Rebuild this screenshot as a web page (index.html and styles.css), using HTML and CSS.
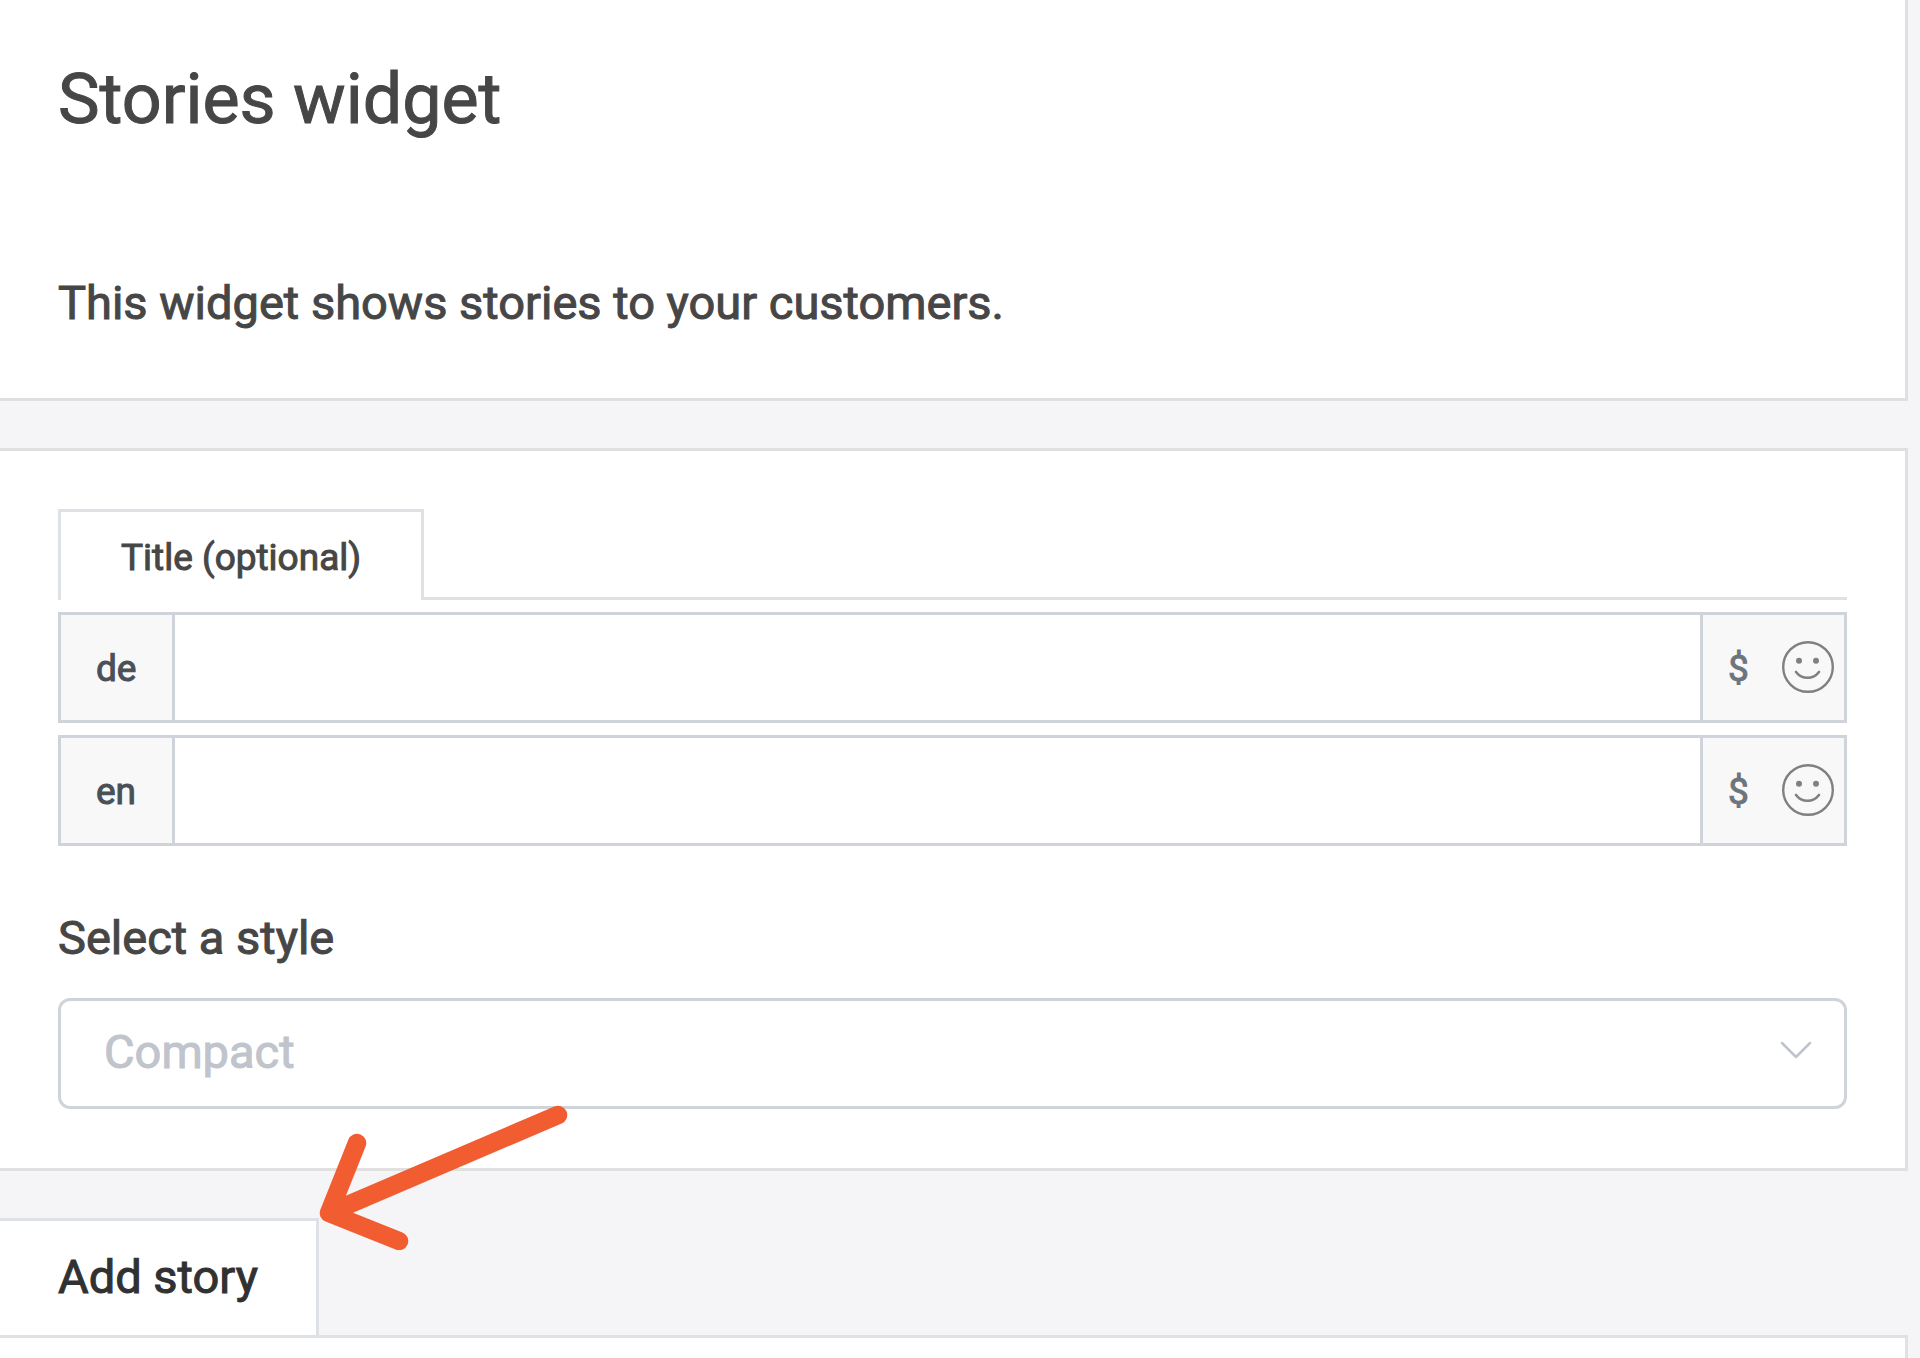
FILE: index.html
```html
<!DOCTYPE html>
<html lang="en">
<head>
<meta charset="utf-8">
<title>Stories widget</title>
<link rel="stylesheet" href="styles.css">
</head>
<body>
<svg class="sprite" aria-hidden="true">
  <symbol id="smile" viewBox="0 0 54 54">
    <circle cx="27" cy="27" r="24.8" fill="none" stroke="currentColor" stroke-width="2.4"/>
    <circle cx="18" cy="20.8" r="3"/>
    <circle cx="35" cy="20.8" r="3"/>
    <path d="M15 32 Q19.5 37.8 26.5 37.8 Q33.5 37.8 38 32" fill="none" stroke="currentColor" stroke-width="2.6" stroke-linecap="round"/>
  </symbol>
</svg>
<main class="page">
  <section class="card intro">
    <h1 class="heading">Stories widget</h1>
    <p class="lead">This widget shows stories to your customers.</p>
  </section>

  <form class="card settings">
    <div class="tabs">
      <div class="tab" id="title-tab">Title (optional)</div>
      <div class="tabs-line"></div>
    </div>
    <div class="translations" role="group" aria-labelledby="title-tab">
      <div class="input-group">
        <label class="lang" for="title-de">de</label>
        <input class="title-input" id="title-de" type="text">
        <div class="tools">
          <button class="tool variable" type="button">$</button>
          <button class="tool emoji" type="button" aria-label="Emoji"><svg class="smile"><use href="#smile"/></svg></button>
        </div>
      </div>
      <div class="input-group">
        <label class="lang" for="title-en">en</label>
        <input class="title-input" id="title-en" type="text">
        <div class="tools">
          <button class="tool variable" type="button">$</button>
          <button class="tool emoji" type="button" aria-label="Emoji"><svg class="smile"><use href="#smile"/></svg></button>
        </div>
      </div>
    </div>
    <label class="field-label" for="style">Select a style</label>
    <div class="select-wrap">
      <select class="select" id="style">
        <option>Compact</option>
      </select>
      <svg class="chevron" viewBox="0 0 32 18" aria-hidden="true"><path d="M2 2 L16 16 L30 2"/></svg>
    </div>
  </form>

  <div class="story-bar">
    <button class="add-story" type="button">Add story</button>
    <svg class="arrow" viewBox="0 0 260 150" aria-hidden="true"><path d="M245 15 L16 113 M44 43 L16 113 L86 141"/></svg>
  </div>
  <section class="card stories"></section>
</main>
</body>
</html>
```
FILE: styles.css
```css
* {
  box-sizing: border-box;
}

body {
  margin: 0;
  background: #f5f5f8;
  color: #464646;
  font-family: Roboto, "Liberation Sans", sans-serif;
  font-size: 47px;
  line-height: 72px;
  -webkit-text-stroke: 1px currentColor;
}

button,
input,
select {
  font: inherit;
  color: inherit;
  -webkit-text-stroke: 1px currentColor;
}

.sprite {
  display: none;
}

.page {
  display: flex;
  flex-direction: column;
  min-height: 100vh;
  padding-right: 12px;
}

.card {
  background: #fff;
  border: 3px solid #e0e0e0;
  border-left: 0;
  padding: 58px 58px 59px;
}

.intro {
  border-top: 0;
}

.heading {
  margin: 0 0 127px;
  font-size: 70px;
  line-height: 82px;
  font-weight: 400;
}

.lead {
  margin: 0;
}

.settings {
  margin-top: 47px;
}

.tabs {
  display: flex;
  font-size: 37px;
  line-height: 84px;
}

.tab {
  border: 3px solid #dee2e6;
  border-bottom: 0;
  padding: 4px 60px 0;
}

.tabs-line {
  flex: 1;
  border-bottom: 3px solid #dee2e6;
}

.translations {
  display: grid;
  gap: 12px;
  margin: 12px 0 56px;
}

.input-group {
  display: flex;
  height: 111px;
  border: 3px solid #ced4da;
  font-size: 37px;
  line-height: 48px;
}

.lang {
  display: flex;
  align-items: center;
  width: 114px;
  padding: 2px 0 0 35px;
  border-right: 3px solid #ced4da;
  background: #f8f8f8;
  color: #495057;
}

.title-input {
  flex: 1;
  min-width: 0;
  border: 0;
  padding: 0 32px;
  background: #fff;
}

.tools {
  display: flex;
  align-items: center;
  justify-content: space-between;
  width: 144px;
  padding: 0 9px 2px 25px;
  border-left: 3px solid #ced4da;
  background: #f8f8f8;
}

.tool {
  display: flex;
  border: 0;
  padding: 0;
  background: none;
  color: #6c757d;
}

.variable {
  padding-top: 4px;
}

.emoji {
  color: #808080;
}

.smile {
  width: 54px;
  height: 54px;
  fill: currentColor;
}

.field-label {
  display: block;
  margin-bottom: 24px;
}

.select-wrap {
  position: relative;
}

.select {
  display: block;
  appearance: none;
  width: 100%;
  height: 111px;
  border: 3px solid #ced4da;
  border-radius: 12px;
  padding: 0 100px 4px 43px;
  background: #fff;
  color: #c0c4cc;
}

.chevron {
  position: absolute;
  top: 43px;
  right: 35px;
  width: 32px;
  height: 18px;
  fill: none;
  stroke: #c0c4cc;
  stroke-width: 2.5;
  stroke-linecap: round;
  stroke-linejoin: round;
  pointer-events: none;
}

.story-bar {
  position: relative;
  display: flex;
  margin-top: 47px;
}

.add-story {
  border: 3px solid #dee2e6;
  border-width: 3px 3px 0 0;
  padding: 20px 58px 22px;
  background: #fff;
  color: #303133;
}

.arrow {
  position: absolute;
  top: -118px;
  left: 313px;
  width: 260px;
  height: 150px;
  fill: none;
  stroke: #f15d30;
  stroke-width: 18.5;
  stroke-linecap: round;
  stroke-linejoin: round;
  pointer-events: none;
}

.stories {
  flex: 1;
  padding: 0;
  border-color: #dee2e6;
  border-bottom: 0;
}
```
